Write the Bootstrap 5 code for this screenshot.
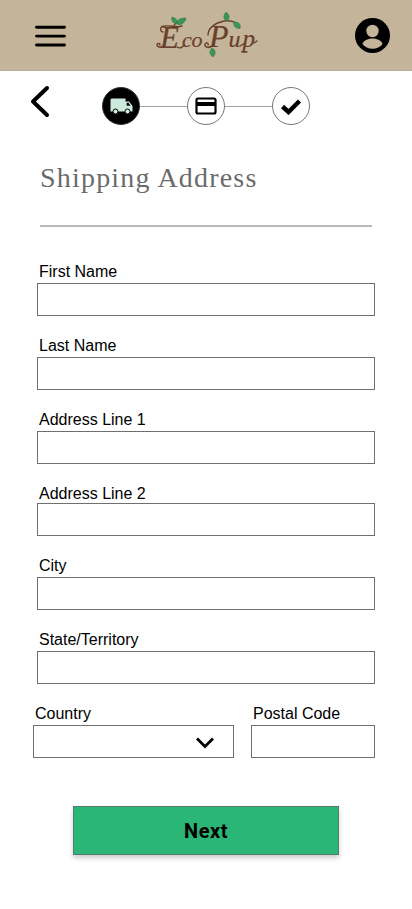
<!DOCTYPE html>
<html lang="en">
<head>
<meta charset="utf-8">
<meta name="viewport" content="width=device-width, initial-scale=1">
<title>EcoPup – Shipping Address</title>
<link href="https://cdn.jsdelivr.net/npm/bootstrap@5.3.0/dist/css/bootstrap.min.css" rel="stylesheet">
<style>
body{font-family:"Liberation Sans",Arial,sans-serif;font-size:16px;color:#000;background:#fff;min-height:909px}
.eco-header{height:71px;background:#c4b499;border-bottom:1px solid #c0ac9c;padding:0 22px 0 35px}
.eco-header svg,.steps svg{display:block}
.menu-btn{padding-top:2px!important}
.brand-mark{margin-left:-9px}
.steps{height:70px;padding:0 0 0 30px}
.step-dot{width:38px;height:38px;border:1px solid #777;border-radius:50%;background:#fff}
.step-dot.current{background:#000;border-color:#333}
.step-line{width:47px;height:1px;background:#a2a2a2}
.back-btn{width:20px;height:33px;margin-right:52px;margin-top:-9px}
.page-title{font-family:"Liberation Serif",serif;font-size:28px;line-height:34px;letter-spacing:1.2px;color:#6b6b6b;margin:20px 0 0 40px}
.rule{height:2px;background:#b9b9b9;margin:30px 40px 0}
.ship-form{margin:32px 37px 0}
.ship-form .form-label{display:block;height:24px;line-height:26px;margin:0;padding-left:2px}
.ship-form .form-control,.ship-form .form-select{height:33px;border:1px solid #6f6f6f;border-radius:0;background-color:#fff}
.ship-form .form-select{background-image:none}
.field{margin-bottom:17px}
.field.tight .form-label{height:22px}
.pair{margin:0 0 0 -4px;gap:17px}
.country{width:201px}
.postal{width:124px}
.select-arrow{right:19px;top:11px;pointer-events:none}
.next-btn{width:266px;height:49px;margin:48px 0 0 73px;border:1px solid #55796a;border-radius:0;background:#29b676;color:#000;font:700 20px/1 Roboto,sans-serif;letter-spacing:.5px;box-shadow:0 3px 5px rgba(0,0,0,.2)}
.next-btn:hover{background:#25a76c}
</style>
</head>
<body>
<header class="eco-header d-flex align-items-center justify-content-between">
  <button class="btn p-0 border-0 menu-btn" aria-label="Menu">
    <svg width="31" height="24" viewBox="0 0 31 24"><path d="M1.500 3.200h28M1.500 12.100h28M1.500 21h28" stroke="#000" stroke-width="2.900" stroke-linecap="round"/></svg>
  </button>
  <svg class="brand-mark" width="106" height="58" viewBox="153 5 106 58" aria-label="EcoPup">
    <g fill="#69402b" stroke="#69402b" stroke-width=".2" font-family="Liberation Serif, serif" font-style="italic">
      <text x="160" y="46.500" font-size="31">E</text>
      <text x="182" y="46" font-size="22">c</text>
      <text x="191.500" y="46" font-size="22">o</text>
      <text x="209" y="46" font-size="32">P</text>
      <text x="228.500" y="46" font-size="24">u</text>
      <text x="242.500" y="46" font-size="25">p</text>
    </g>
    <g fill="none" stroke="#69402b" stroke-width="1.400" stroke-linecap="round">
      <path d="M163 31c-4-1-3-6 2-6 6-1 11 2 17 0M163 45c-2 2-6 1-6-1 0-2 3-2 3 0M174 25l2-4M177 46c3 2 6 0 7-2"/>
      <path d="M208 34c0-7 7-12 16-14 5-1 7 0 10 1M212 45c-3 3-8 1-7-2 1-2 4-1 3 1M226 20v-2M240 45l5-3M247 51h-5M254 42l3-2"/>
    </g>
    <g fill="#3b9558" stroke="#34784a" stroke-width=".6">
      <path d="M177 23c-4-1-6-3-5-7 4 1 6 3 5 7zM177 23c0-5 4-6 9-6-1 5-5 8-9 6z"/>
      <path d="M227 20c-4-2-4-5-1-9 4 3 4 6 1 9zM234 21c5 0 7 2 6 6.500-5 0-7-3-6-6.500z"/>
      <path d="M212 47c4 2 4 6 1 9-4-3-4-6-1-9z"/>
    </g>
  </svg>
  <button class="btn p-0 border-0" aria-label="Account">
    <svg width="35" height="35" viewBox="0 0 35 35"><circle cx="17.500" cy="17.500" r="17.500"/><circle cx="17.500" cy="13" r="6.200" fill="#c4b499"/><path d="M7.500 26c1-4 6.500-5.500 10-5.500s9 1.500 10 5.500c-2 3-6 4.800-10 4.800S9.500 29 7.500 26z" fill="#c4b499"/></svg>
  </button>
</header>

<main>
  <nav class="steps d-flex align-items-center" aria-label="Checkout steps">
    <button class="btn p-0 border-0 back-btn" aria-label="Back">
      <svg width="20" height="33" viewBox="0 0 20 33"><path d="M17 3L3 16.500 17 30" fill="none" stroke="#000" stroke-width="4" stroke-linecap="round" stroke-linejoin="round"/></svg>
    </button>
    <span class="step-dot current d-flex align-items-center justify-content-center">
      <svg width="23" height="17" viewBox="0 0 23 17"><path d="M1.500.5h14v3h3.500l3.500 4.500v5.500H.5V1.500z" fill="#cbe9dc"/><path d="M16.700 4.800h1.800l2 3h-3.800z"/><g fill="#cbe9dc" stroke="#000"><circle cx="5.500" cy="13.500" r="2.500"/><circle cx="17.500" cy="13.500" r="2.500"/></g></svg>
    </span>
    <span class="step-line"></span>
    <span class="step-dot d-flex align-items-center justify-content-center">
      <svg width="22" height="18" viewBox="0 0 22 18"><rect x="1.500" y="1.500" width="19" height="15" rx="1.500" fill="none" stroke="#000" stroke-width="2.200"/><path d="M2 5h18v4H2z"/></svg>
    </span>
    <span class="step-line"></span>
    <span class="step-dot d-flex align-items-center justify-content-center">
      <svg width="22" height="18" viewBox="0 0 22 18"><path d="M2.500 9.500l6 5.500L19.500 4" fill="none" stroke="#000" stroke-width="4.500"/></svg>
    </span>
  </nav>

  <h1 class="page-title fw-normal">Shipping Address</h1>
  <div class="rule"></div>

  <form class="ship-form">
    <div class="field"><label class="form-label" for="first">First Name</label><input id="first" class="form-control" type="text"></div>
    <div class="field"><label class="form-label" for="last">Last Name</label><input id="last" class="form-control" type="text"></div>
    <div class="field"><label class="form-label" for="addr1">Address Line 1</label><input id="addr1" class="form-control" type="text"></div>
    <div class="field tight"><label class="form-label" for="addr2">Address Line 2</label><input id="addr2" class="form-control" type="text"></div>
    <div class="field"><label class="form-label" for="city">City</label><input id="city" class="form-control" type="text"></div>
    <div class="field"><label class="form-label" for="state">State/Territory</label><input id="state" class="form-control" type="text"></div>
    <div class="pair d-flex">
      <div class="country">
        <label class="form-label" for="country">Country</label>
        <div class="position-relative">
          <select id="country" class="form-select"><option></option></select>
          <svg class="select-arrow position-absolute" width="20" height="13" viewBox="0 0 20 13"><path d="M2 2.500l8 8 8-8" fill="none" stroke="#000" stroke-width="2.800"/></svg>
        </div>
      </div>
      <div class="postal"><label class="form-label" for="postal">Postal Code</label><input id="postal" class="form-control" type="text"></div>
    </div>
  </form>
  <button class="btn next-btn d-block" type="button">Next</button>
</main>
<script src="https://cdn.jsdelivr.net/npm/bootstrap@5.3.0/dist/js/bootstrap.bundle.min.js"></script>
</body>
</html>
